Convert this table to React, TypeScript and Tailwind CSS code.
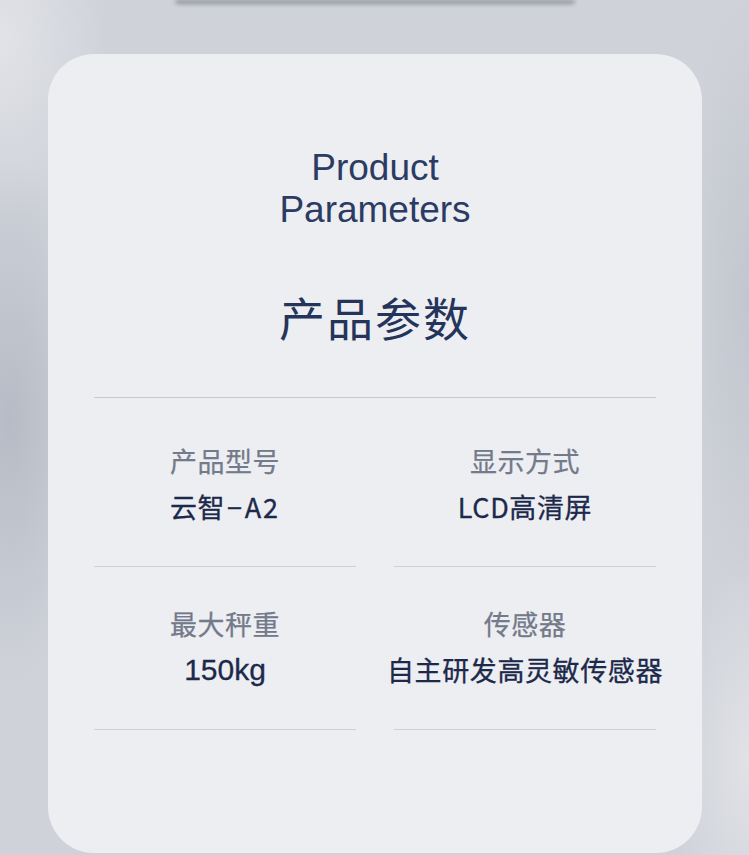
const params = [
  [
    { label: "产品型号", value: "云智-A2" },
    { label: "显示方式", value: "LCD高清屏" },
  ],
  [
    { label: "最大秤重", value: "150kg", latin: true },
    { label: "传感器", value: "自主研发高灵敏传感器" },
  ],
];

const cjk = "font-['Noto_Sans_CJK_SC','Noto_Sans',sans-serif]";

function Cell({
  label,
  value,
  latin,
  top,
}: {
  label: string;
  value: string;
  latin?: boolean;
  top: string;
}) {
  return (
    <div className={`flex flex-col items-center ${top} pb-[44px] border-b border-[#cdd0d6]`}>
      <p className={`${cjk} whitespace-nowrap text-[27px] leading-[30px] tracking-[0.5px] text-[#737a8b] [-webkit-text-stroke:0.25px_#737a8b]`}>
        {label}
      </p>
      <p
        className={`mt-[16px] whitespace-nowrap leading-[30px] text-[#1c294b] [-webkit-text-stroke:0.3px_#1c294b] ${
          latin
            ? "font-['Liberation_Sans',Arial,sans-serif] text-[30px]"
            : `${cjk} text-[27px] tracking-[0.6px]`
        }`}
      >
        {value === "云智-A2" ? (
          <>
            云智<span className="mx-[2px]">−</span>
            <span className="tracking-[2px]">A2</span>
          </>
        ) : (
          value
        )}
      </p>
    </div>
  );
}

export default function App() {
  return (
    <div className="relative h-[855px] w-[749px] overflow-hidden bg-[#cfd2d9] bg-[radial-gradient(ellipse_90px_260px_at_10px_420px,#b6bbc5,transparent),radial-gradient(ellipse_110px_180px_at_0px_40px,#e1e3e7,transparent),radial-gradient(ellipse_70px_300px_at_749px_300px,#c2c6ce,transparent),radial-gradient(ellipse_80px_200px_at_749px_760px,#e0e2e6,transparent)]">
      <div className="flex justify-center">
        <div className="h-[4px] w-[400px] rounded-b-full bg-[#8d919a] blur-[2px]" />
      </div>

      <div className="ml-[48px] mt-[50px] flex h-[799px] w-[654px] flex-col rounded-[46px] bg-[#edeef1] px-[46px] pt-[93px]">
        <h1 className="text-center font-['Liberation_Sans',Arial,sans-serif] text-[37px] leading-[42px] text-[#2b3b63]">
          Product
          <br />
          Parameters
        </h1>

        <h2 className={`${cjk} mt-[62px] text-center text-[46px] leading-[46px] tracking-[2px] text-[#24345b]`}>
          产品参数
        </h2>

        <div className="mt-[58px] h-px bg-[#c6c9d0]" />

        {params.map((row, i) => (
          <div key={i} className="grid grid-cols-2 gap-x-[38px]">
            {row.map((cell) => (
              <Cell
                key={cell.label}
                {...cell}
                top={i === 0 ? "pt-[48px]" : "pt-[42px]"}
              />
            ))}
          </div>
        ))}
      </div>
    </div>
  );
}
